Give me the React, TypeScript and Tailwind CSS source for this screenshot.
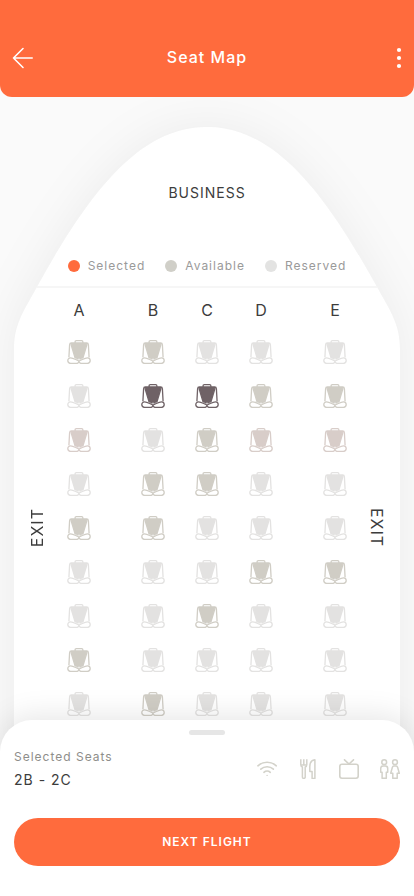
import { useState } from 'react';

type SeatStatus = 'available' | 'reserved' | 'premium' | 'selected';

const COLUMNS = ['A', 'B', 'C', 'D', 'E'];

const CODES: Record<string, SeatStatus> = {
  a: 'available',
  r: 'reserved',
  p: 'premium',
};

// One string per row, one letter per column.
const ROWS = ['aarrr', 'raaaa', 'prapp', 'raarr', 'aarrr', 'rrraa', 'rrarr', 'arrrr', 'rarrr'];

const EXIT_ROW = 5;

const SEAT_TONE: Record<SeatStatus, string> = {
  available: 'text-[#d0cdc5]',
  reserved: 'text-[#e3e2e1]',
  premium: 'text-[#d8cdc9]',
  selected: 'text-[#6f6266]',
};

const LEGEND = [
  { label: 'Selected', dot: 'bg-[#ff6b3d]' },
  { label: 'Available', dot: 'bg-[#d0cfc8]' },
  { label: 'Reserved', dot: 'bg-[#e3e3e2]' },
];

function SeatIcon() {
  return (
    <svg width="24" height="24" viewBox="0 0 24 24" fill="none" stroke="currentColor" strokeWidth="1.3" strokeLinejoin="round" aria-hidden="true">
      <path d="M8.1 3V1.9Q8.1.7 9.3.7h5.4q1.2 0 1.2 1.2V3" />
      <path d="M3.8 3h16.4L15.8 18.4 12 19.6 8.2 18.4z" fill="currentColor" stroke="none" />
      <path d="M1.9 17.4 2.6 4.8Q2.7 3 4.4 3h15.2q1.7 0 1.8 1.8l.7 12.6" />
      <path d="M3.9 4 8.2 18.2M20.1 4 15.8 18.2" />
      <path d="M12 20.8C9.4 20.2 6.6 17.8 3.6 17.8a2.8 2.8 0 0 0 0 5.6h6.2c1.4 0 2.2-1 2.2-2.6z" fill="white" />
      <path d="M12 20.8c2.6-.6 5.4-3 8.4-3a2.8 2.8 0 0 1 0 5.6h-6.2c-1.4 0-2.2-1-2.2-2.6z" fill="white" />
      <circle cx="12" cy="19.4" r="1.1" fill="white" strokeWidth="0.8" />
    </svg>
  );
}

function WifiIcon() {
  return (
    <svg width="20" height="20" viewBox="0 0 20 20" fill="none" stroke="currentColor" strokeWidth="1.6" strokeLinecap="round" role="img" aria-label="Wi-Fi">
      <path d="M.9 6.8a13.6 13.6 0 0 1 18.4 0" />
      <path d="M3.8 10.2a9.2 9.2 0 0 1 12.6 0" />
      <path d="M6.9 13.3a4.7 4.7 0 0 1 6.4 0" />
      <circle cx="10.1" cy="16.4" r=".7" fill="currentColor" stroke="none" />
    </svg>
  );
}

function MealIcon() {
  return (
    <svg width="20" height="20" viewBox="0 0 20 20" fill="none" stroke="currentColor" strokeWidth="1.5" strokeLinejoin="round" role="img" aria-label="Meals">
      <path d="M2.8.2v5.3q0 1.9 1.6 2.5V18q0 1.4 1.4 1.4T7.2 18V8q1.6-.6 1.6-2.5V.2" />
      <path d="M5.8.2v6M2.8 6.1h6" />
      <path d="M16.9.8v18.6h-2.8v-6.9h-2.3V7.4q0-5.8 5.1-6.6z" />
    </svg>
  );
}

function TvIcon() {
  return (
    <svg width="20" height="20" viewBox="0 0 20 20" fill="none" stroke="currentColor" strokeWidth="1.6" strokeLinecap="round" role="img" aria-label="Television">
      <rect x=".8" y="5.3" width="18.4" height="13.9" rx="2.2" />
      <path d="M5.5.8 10 5l4.5-4.2" />
    </svg>
  );
}

function RestroomIcon() {
  return (
    <svg width="20" height="20" viewBox="0 0 20 20" fill="none" stroke="currentColor" strokeWidth="1.5" strokeLinejoin="round" role="img" aria-label="Restrooms">
      <circle cx="4.2" cy="3.2" r="2.4" />
      <path d="M3 7h2.4q2.3 0 2.3 2.4v3.8H6.3v6.1H2.1v-6.1H.7V9.4Q.7 7 3 7z" />
      <circle cx="15" cy="3.2" r="2.4" />
      <path d="M13.9 7h2.2q1.1 0 1.5 1.3l1.7 6h-2.1v5h-4.4v-5h-2.1l1.7-6Q12.8 7 13.9 7z" />
    </svg>
  );
}

/** Outline of the cabin: a stretched nose cone on top of a straight body. */
function Fuselage() {
  return (
    <div className="absolute inset-0 flex flex-col drop-shadow-[0_0_24px_rgba(0,0,0,0.06)]" aria-hidden="true">
      <svg className="h-56 w-full shrink-0" viewBox="0 0 386 224" preserveAspectRatio="none">
        <path d="M0 224C0 198 8 187 23 160 75 66 125 0 193 0S311 66 363 160C378 187 386 198 386 224z" fill="white" />
      </svg>
      <div className="flex-1 bg-white" />
    </div>
  );
}

// The aisles run between A and B, and between D and E.
function cellClass(index: number) {
  if (index === 0) return 'mr-5 flex w-[54px] justify-center';
  if (index === COLUMNS.length - 1) return 'ml-5 flex w-[54px] justify-center';
  return 'flex w-[54px] justify-center';
}

export default function App() {
  const [selected, setSelected] = useState<string[]>(['2B', '2C']);

  function toggle(id: string) {
    setSelected((cur) => (cur.includes(id) ? cur.filter((s) => s !== id) : [...cur, id].sort()));
  }

  return (
    <div className="flex h-screen flex-col overflow-hidden bg-[#fafafa] font-['Inter',sans-serif] text-[#3c3c3c]">
      <header className="relative z-10 rounded-b-xl bg-[#ff6b3d] px-3 pt-10 pb-[21px] text-white">
        <div className="flex h-9 items-center justify-between">
          <button type="button" aria-label="Back" className="w-6">
            <svg width="22" height="22" viewBox="0 0 22 22" fill="none" stroke="currentColor" strokeWidth="1.6" strokeLinecap="round" strokeLinejoin="round">
              <path d="M20.2 11H1.5M11 1.5 1.5 11l9.5 9.5" />
            </svg>
          </button>
          <h1 className="pb-0.5 text-base font-medium tracking-[1px]">Seat Map</h1>
          <button type="button" aria-label="More options" className="flex w-6 justify-end">
            <svg width="6" height="22" viewBox="0 0 6 22" fill="currentColor">
              <circle cx="3" cy="3" r="2.1" />
              <circle cx="3" cy="11" r="2.1" />
              <circle cx="3" cy="19" r="2.1" />
            </svg>
          </button>
        </div>
      </header>

      <main className="min-h-0 flex-1 overflow-y-auto px-3.5 pt-[30px] [scrollbar-width:none]">
        <div className="relative pb-10">
          <Fuselage />
          <div className="relative">
            <h2 className="pt-14 text-center text-sm leading-5 tracking-[1px]">BUSINESS</h2>
            <ul className="mt-[53px] flex justify-center gap-5 text-xs leading-5 tracking-[1px] text-[#9a9a9a]">
              {LEGEND.map((item) => (
                <li key={item.label} className="flex items-center gap-2">
                  <span className={`h-3 w-3 rounded-full ${item.dot}`} />
                  {item.label}
                </li>
              ))}
            </ul>
            <div className="mx-[23px] mt-2.5 h-0.5 bg-[#f6f6f6]" />

            <div className="flex h-[42px] items-center justify-center pt-0.5 text-base">
              {COLUMNS.map((col, i) => (
                <span key={col} className={cellClass(i)}>
                  {col}
                </span>
              ))}
            </div>

            {ROWS.map((row, r) => {
              const num = r + 1;
              const exit = num === EXIT_ROW;
              return (
                <div key={num} className="flex h-11 items-center">
                  <div className="flex flex-1 justify-center pl-2">
                    {exit && (
                      <span className="rotate-180 text-base leading-5 tracking-[1px] [writing-mode:vertical-rl]">EXIT</span>
                    )}
                  </div>
                  {COLUMNS.map((col, i) => {
                    const id = `${num}${col}`;
                    const base = CODES[row[i]];
                    const status = selected.includes(id) ? 'selected' : base;
                    return (
                      <div key={id} className={cellClass(i)}>
                        <button
                          type="button"
                          aria-label={`Seat ${id}, ${status}`}
                          aria-pressed={status === 'selected'}
                          disabled={base === 'reserved'}
                          onClick={() => toggle(id)}
                          className={SEAT_TONE[status]}
                        >
                          <SeatIcon />
                        </button>
                      </div>
                    );
                  })}
                  <div className="flex flex-1 justify-center pr-2">
                    {exit && (
                      <span className="text-base leading-5 tracking-[1px] [writing-mode:vertical-rl]">EXIT</span>
                    )}
                  </div>
                </div>
              );
            })}
          </div>
        </div>
      </main>

      <section className="relative z-10 -mt-8 rounded-t-[32px] bg-white px-3.5 pt-2.5 pb-[30px] shadow-[0_-4px_30px_rgba(0,0,0,0.10)]">
        <div className="mx-auto h-[5px] w-9 rounded-full bg-[#e6e6e6]" />
        <div className="mt-3 flex items-center justify-between">
          <div>
            <p className="text-xs leading-5 tracking-[1px] text-[#8e8e8a]">Selected Seats</p>
            <p className="mt-[3px] text-sm leading-5 tracking-[1px]">{selected.join(' - ')}</p>
          </div>
          <div className="flex gap-[21px] text-[#d3d2ca]">
            <WifiIcon />
            <MealIcon />
            <TvIcon />
            <RestroomIcon />
          </div>
        </div>
        <button
          type="button"
          className="mt-7 h-12 w-full rounded-full bg-[#ff6b3d] text-xs font-semibold tracking-[1px] text-white"
        >
          NEXT FLIGHT
        </button>
      </section>
    </div>
  );
}
